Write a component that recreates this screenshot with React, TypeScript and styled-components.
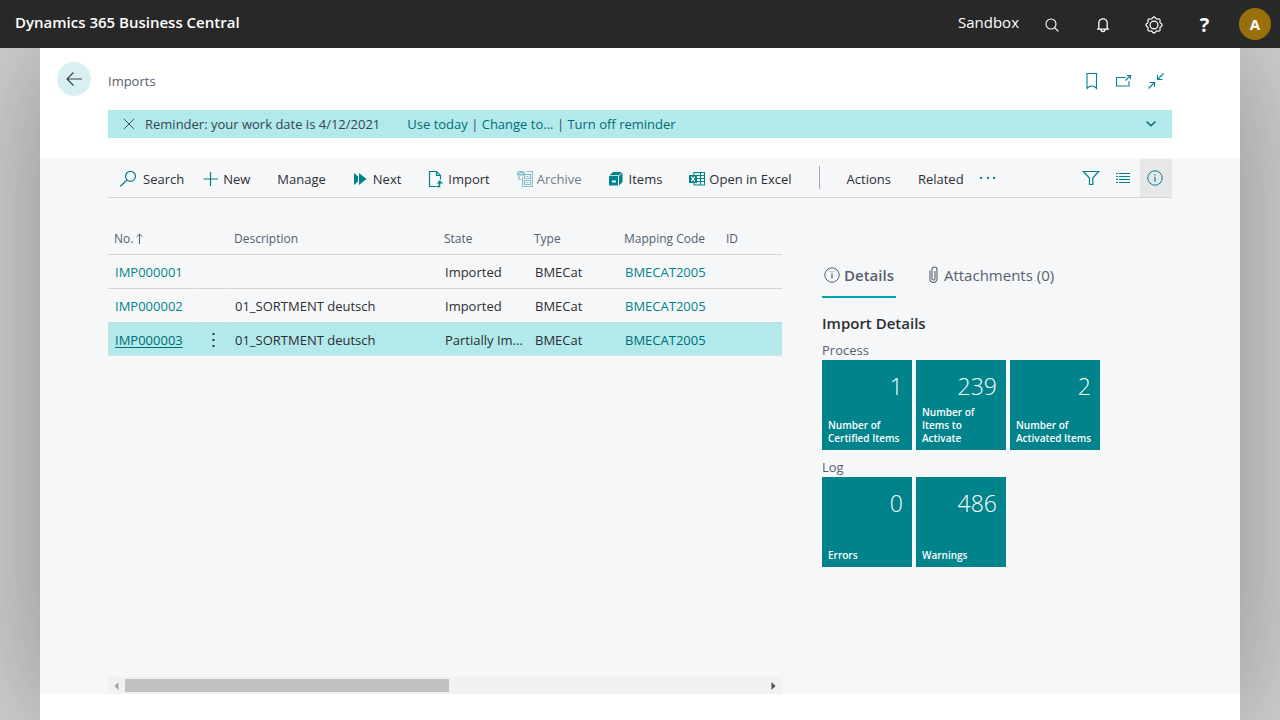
import React from "react";
import styled, { createGlobalStyle, css } from "styled-components";

const color = {
  teal: "#00838b",
  band: "#b2e9eb",
  muted: "#55606f",
  text: "#2c2e31",
  line: "#d2d5d8",
  surface: "#f6f7f9",
};

const GlobalStyle = createGlobalStyle`
  *, *::before, *::after { box-sizing: border-box; }
  body {
    margin: 0;
    font-family: "Open Sans", "Noto Sans", sans-serif;
    font-size: 13px;
    line-height: 20px;
    color: ${color.text};
  }
  button {
    font: inherit;
    color: inherit;
    background: none;
    border: 0;
    padding: 0;
    cursor: pointer;
  }
  a { color: ${color.teal}; text-decoration: none; }
  svg { display: block; flex: none; fill: none; stroke: currentColor; }
  h1, h2, h3 { margin: 0; font: inherit; }
`;

const Shell = styled.div`
  display: flex;
  flex-direction: column;
  min-height: 100vh;
`;

const TopBar = styled.header`
  position: relative;
  z-index: 1;
  display: flex;
  align-items: center;
  height: 48px;
  padding: 0 9px 0 15px;
  color: #fff;
  background: #282828;
  font-size: 15px;
`;

const Product = styled.h1`
  flex: 1;
  padding-bottom: 5px;
  font-weight: 600;
`;

const Environment = styled.span`
  padding: 0 19px 5px 0;
`;

const TopButton = styled.button`
  display: grid;
  place-items: center;
  width: 27px;
  height: 48px;
  margin-right: 24px;
  padding-top: 2px;
`;

const HelpMark = styled.span`
  font-size: 20px;
  font-weight: 700;
`;

const Avatar = styled.button`
  width: 32px;
  height: 32px;
  margin-left: -3px;
  border-radius: 50%;
  background: #986f0b;
  font-weight: 700;
`;

const Backdrop = styled.div`
  flex: 1;
  display: flex;
  padding: 0 40px;
  background: #d0d0d0;
  overflow: hidden;
`;

const Page = styled.main`
  flex: 1;
  min-width: 0;
  display: flex;
  flex-direction: column;
  padding-bottom: 26px;
  background: #fff;
  box-shadow: 0 0 120px rgba(0, 0, 0, 0.32);
`;

const TitleRow = styled.div`
  display: flex;
  align-items: center;
  padding: 14px 75px 14px 17px;
`;

const BackButton = styled.button`
  display: grid;
  place-items: center;
  width: 34px;
  height: 34px;
  margin-right: 17px;
  border-radius: 50%;
  background: #d9f0f2;
  color: #3c4247;
`;

const PageTitle = styled.h2`
  flex: 1;
  padding-top: 4px;
  color: ${color.muted};
`;

const PageTools = styled.div`
  display: flex;
  gap: 15px;
  padding-top: 4px;
  color: ${color.teal};

  button { display: block; }
`;

const Reminder = styled.div`
  display: flex;
  align-items: center;
  height: 28px;
  margin: 0 68px 20px;
  padding: 0 15px;
  background: ${color.band};
  color: #35474b;

  a { color: #006d75; }
`;

const CloseButton = styled.button`
  margin-right: 10px;
`;

const ReminderText = styled.span`
  margin-right: 27px;
`;

const ReminderLinks = styled.span`
  flex: 1;
`;

const ExpandButton = styled.button`
  color: #006d75;
`;

const Content = styled.section`
  flex: 1;
  display: flex;
  flex-direction: column;
  padding: 0 68px;
  background: ${color.surface};
`;

const Toolbar = styled.div`
  display: flex;
  align-items: center;
  gap: 27px;
  height: 40px;
  padding-left: 12px;
  border-bottom: 1px solid ${color.line};
`;

const Action = styled.button<{ $dim?: boolean }>`
  display: flex;
  align-items: center;
  gap: 4px;
  padding-top: 2px;
  white-space: nowrap;
  color: ${(p) => (p.$dim ? "#737c88" : color.text)};

  svg {
    color: ${color.teal};
    opacity: ${(p) => (p.$dim ? 0.45 : 1)};
  }
`;

const ActionPair = styled.div<{ $gap: number }>`
  display: flex;
  gap: ${(p) => p.$gap}px;
`;

const Divider = styled.span`
  width: 1px;
  height: 23px;
  background: #a5a9b3;
`;

const ViewButtons = styled.div`
  display: flex;
  align-self: stretch;
  margin-left: auto;
  padding-top: 1px;
`;

const ViewButton = styled.button<{ $active?: boolean }>`
  display: grid;
  place-items: center;
  width: 32px;
  padding-right: 2px;
  color: ${color.teal};
  border-radius: 2px;
  background: ${(p) => (p.$active ? "#e6e7e8" : "transparent")};
`;

const Columns = styled.div`
  flex: 1;
  display: grid;
  grid-template-columns: minmax(0, 1fr) 350px;
  gap: 40px;
`;

const ListPane = styled.div`
  display: flex;
  flex-direction: column;
  justify-content: space-between;
`;

const Grid = styled.table`
  width: 100%;
  table-layout: fixed;
  border-spacing: 0;
`;

const HeadCell = styled.th<{ $rule?: boolean }>`
  height: 57px;
  padding: 26px 0 0 6px;
  border-bottom: 1px solid ${color.line};
  ${(p) => p.$rule && css`border-right: 1px solid #f1f3f5;`}
  text-align: left;
  font-size: 12px;
  font-weight: 400;
  color: ${color.muted};
  white-space: nowrap;
`;

const Cell = styled.td<{ $split?: boolean }>`
  height: 34px;
  padding: 1px 4px 0 7px;
  border-bottom: 1px solid ${color.line};
  ${(p) => p.$split && css`border-left: 1px solid transparent; padding-left: 6px;`}
  overflow: hidden;
  text-overflow: ellipsis;
  white-space: nowrap;
`;

const Row = styled.tr<{ $selected?: boolean }>`
  background: ${(p) => (p.$selected ? color.band : "transparent")};
  a {
    color: ${(p) => (p.$selected ? "#006d75" : color.teal)};
  }
  td:first-child a {
    text-decoration: ${(p) => (p.$selected ? "underline" : "none")};
    text-underline-offset: 2px;
  }
  ${(p) => p.$selected && css`
    ${Cell} {
      height: 33px;
      border-bottom-color: #dfe2e4;
    }
  `}
`;

const RowMenu = styled.button`
  display: block;
  padding: 0 6px;
`;

const ScrollTrack = styled.div`
  display: flex;
  align-items: center;
  height: 17px;
  background: #f1f1f1;
`;

const ScrollArrow = styled.button<{ $end?: boolean }>`
  display: grid;
  place-items: center;
  width: 17px;
  height: 17px;
  margin-left: ${(p) => (p.$end ? "auto" : 0)};
  color: ${(p) => (p.$end ? "#505050" : "#a3a3a3")};
`;

const ScrollThumb = styled.div`
  width: 48%;
  height: 13px;
  background: #c1c1c1;
`;

const FactBox = styled.aside`
  padding-top: 60px;
`;

const Tabs = styled.div`
  display: flex;
  gap: 30px;
  font-size: 15px;
  color: ${color.muted};
`;

const Tab = styled.button<{ $active?: boolean }>`
  display: flex;
  align-items: center;
  gap: 4px;
  height: 40px;
  padding: 0 2px 5px;
  border-bottom: 2px solid ${(p) => (p.$active ? "#00a4ab" : "transparent")};
  font-weight: ${(p) => (p.$active ? 600 : 400)};
`;

const FactTitle = styled.h3`
  padding: 14px 0 7px;
  font-size: 15px;
  line-height: 22px;
  font-weight: 600;
`;

const GroupLabel = styled.div`
  padding-bottom: 1px;
  line-height: 18px;
  color: ${color.muted};
`;

const Tiles = styled.div`
  display: flex;
  gap: 4px;
  margin-bottom: 8px;
`;

const Tile = styled.button`
  display: flex;
  flex-direction: column;
  justify-content: space-between;
  width: 90px;
  height: 90px;
  padding: 10px 4px 5px 6px;
  background: ${color.teal};
  color: #fff;
  text-align: left;
`;

const TileValue = styled.span`
  align-self: flex-end;
  padding-right: 5px;
  font-size: 23px;
  line-height: 32px;
  font-weight: 300;
`;

const TileLabel = styled.span`
  font-size: 10px;
  line-height: 13px;
  font-weight: 600;
`;

const SearchIcon = () => (
  <svg width="14" height="14" viewBox="0 0 14 14">
    <circle cx="6" cy="6" r="5" strokeWidth="1.1" />
    <path d="M9.6 9.6 13.4 13.4" strokeWidth="1.3" />
  </svg>
);

const BellIcon = () => (
  <svg width="14" height="16" viewBox="0 0 14 16" strokeWidth="1.3">
    <path d="M2.8 11.8V6a4.2 4.2 0 0 1 8.4 0v5.8M1 12.2h12M5 12.6a2 2 0 0 0 4 0" />
  </svg>
);

const gearPath = (() => {
  const points: string[] = [];
  for (let i = 0; i <= 96; i++) {
    const a = (i / 96) * Math.PI * 2;
    const r = 7.3 + 0.75 * Math.cos(a * 8);
    points.push(`${(9 + r * Math.cos(a)).toFixed(2)} ${(9 + r * Math.sin(a)).toFixed(2)}`);
  }
  return `M${points.join("L")}Z`;
})();

const GearIcon = () => (
  <svg width="18" height="18" viewBox="0 0 18 18" strokeWidth="1.2">
    <path d={gearPath} />
    <circle cx="9" cy="9" r="3.9" />
  </svg>
);

const BackIcon = () => (
  <svg width="16" height="14" viewBox="0 0 16 14" strokeWidth="1.2">
    <path d="M16 7H1M7.5.5 1 7l6.5 6.5" />
  </svg>
);

const BookmarkIcon = () => (
  <svg width="16" height="18" viewBox="0 0 16 18" strokeWidth="1.1">
    <path d="M3 1.5h9.5v15L11 15c-2-1.3-4.5-1.3-6.5 0L3 16.5Z" />
  </svg>
);

const PopOutIcon = () => (
  <svg width="17" height="18" viewBox="0 0 17 18" strokeWidth="1.1">
    <path d="M10.5 5.5h-9V14H14V9M10.5 8.5l5-5M12 3.5h3.5V7" />
  </svg>
);

const CollapseIcon = () => (
  <svg width="18" height="18" viewBox="0 0 18 18" strokeWidth="1.1">
    <path d="M16.5 1.5l-6 6M10.5 3v4.5h5M1.5 16.5l6-6M2.5 10.5h5V15" />
  </svg>
);

const CrossIcon = () => (
  <svg width="12" height="12" viewBox="0 0 12 12" strokeWidth=".9">
    <path d="m.8.8 10.4 10.4M11.2.8.8 11.2" />
  </svg>
);

const ChevronIcon = () => (
  <svg width="12" height="8" viewBox="0 0 12 8" strokeWidth="1.5">
    <path d="m1.5 1.5 4.5 4.3 4.5-4.3" />
  </svg>
);

const FindIcon = () => (
  <svg width="19" height="18" viewBox="1 0 19 18" strokeWidth="1.2">
    <circle cx="11.5" cy="6.3" r="5" />
    <path d="M8 10 1.2 16.5" />
  </svg>
);

const PlusIcon = () => (
  <svg width="16" height="16" viewBox="0 0 16 16" strokeWidth="1.2">
    <path d="M7.5 1v14M.5 8H15" />
  </svg>
);

const NextIcon = () => (
  <svg width="16" height="14" viewBox="0 0 16 14">
    <path d="M1 1l4 3.5v5L1 13ZM6 1l7.5 6L6 13Z" fill="currentColor" stroke="none" />
  </svg>
);

const ImportIcon = () => (
  <svg width="16" height="18" viewBox="0 0 16 18" strokeWidth="1.2">
    <path d="M8.5 16.5h-7v-15h7l4 4v4M8.5 1.5v4h4" />
    <path d="M9 16.5h2.5V12" strokeWidth="1.5" />
    <path d="M8.7 13.5 11.7 10.3 15 13.5Z" fill="currentColor" stroke="none" />
  </svg>
);

const ArchiveIcon = () => (
  <svg width="16" height="18" viewBox="0 0 16 18" strokeWidth="1.2">
    <path d="M0 1h8v4.5H0Z" fill="currentColor" stroke="none" />
    <path d="m0 1.3 4 2.5 4-2.5" stroke="#f6f7f9" strokeWidth=".8" />
    <path d="M9.5 1.5h6v15h-10v-9M2 6v3.5h2M7.5 4.5h6v4h-6ZM7.5 10.5h6v4h-6ZM9.5 6.5h2M9.5 12.5h2" />
  </svg>
);

const ItemsIcon = () => (
  <svg width="16" height="16" viewBox="0 0 16 16">
    <path d="M0 5h9v9.5H0ZM.7 4.2 4 1h9L9.8 4.2ZM10 5l3.5-3.5V11L10 14.5Z" fill="currentColor" stroke="none" />
    <path d="M3 10.5h4" stroke="#fff" strokeWidth="2" />
  </svg>
);

const ExcelIcon = () => (
  <svg width="16" height="16" viewBox="0 0 16 16">
    <path d="M5 1.5h10.5V14H5M5 1v13M8 4.500h7M8 7.5h7M8 10.5h7M11.5 2v12" strokeWidth="1.1" />
    <path d="M0 4h8v8H0Z" fill="currentColor" stroke="none" />
    <path d="m2.200 5.600 3.600 4.800M5.800 5.600l-3.600 4.800" stroke="#fff" strokeWidth="1.3" />
  </svg>
);

const MoreIcon = () => (
  <svg width="16" height="20" viewBox="0 0 16 20">
    <path d="M0 8h2v2H0ZM7 8h2v2H7ZM13 8h2v2h-2Z" fill="currentColor" stroke="none" />
  </svg>
);

const FilterIcon = () => (
  <svg width="18" height="16" viewBox="0 0 18 16" strokeWidth="1.2">
    <path d="M1.3 1.5h15.4L10.8 8v6.5H7.5V8Z" />
  </svg>
);

const ListIcon = () => (
  <svg width="14" height="12" viewBox="0 0 14 12">
    <path d="M0 1.5h2M3 1.5h11M0 4.5h2M3 4.5h11M0 7.5h2M3 7.5h11M0 10.5h2M3 10.5h11" />
  </svg>
);

const InfoIcon = () => (
  <svg width="16" height="16" viewBox="0 0 16 16">
    <circle cx="8" cy="8" r="7.2" />
    <path d="M8 6.7v5M8 4.2v1.3" strokeWidth="1.2" />
  </svg>
);

const ClipIcon = () => (
  <svg width="12" height="18" viewBox="0 0 12 18" strokeWidth="1.1">
    <path d="M2 4.5V13a3.5 3.5 0 0 0 7 0V3.5a2.500 2.500 0 0 0-5 0v9a1.500 1.500 0 0 0 3 0V5" />
  </svg>
);

const DotsIcon = () => (
  <svg width="3" height="16" viewBox="0 0 3 16">
    <path d="M.5 1h2v2h-2ZM.5 7h2v2h-2ZM.5 13h2v2h-2Z" fill="currentColor" stroke="none" />
  </svg>
);

const SortIcon = () => (
  <svg width="7" height="13" viewBox="0 0 7 13">
    <path d="M3.5 11V1M.7 3.8 3.5 1l2.8 2.8" />
  </svg>
);

const SortLabel = styled.span`
  display: flex;
  align-items: center;
  gap: 3px;
`;

const rows = [
  { no: "IMP000001", description: "", state: "Imported", type: "BMECat", code: "BMECAT2005" },
  { no: "IMP000002", description: "01_SORTMENT deutsch", state: "Imported", type: "BMECat", code: "BMECAT2005" },
  { no: "IMP000003", description: "01_SORTMENT deutsch", state: "Partially Im...", type: "BMECat", code: "BMECAT2005", selected: true },
];

const groups = [
  {
    label: "Process",
    tiles: [
      { value: 1, label: "Number of Certified Items" },
      { value: 239, label: "Number of Items to Activate" },
      { value: 2, label: "Number of Activated Items" },
    ],
  },
  {
    label: "Log",
    tiles: [
      { value: 0, label: "Errors" },
      { value: 486, label: "Warnings" },
    ],
  },
];

export default function App() {
  return (
    <Shell>
      <GlobalStyle />
      <TopBar>
        <Product>Dynamics 365 Business Central</Product>
        <Environment>Sandbox</Environment>
        <TopButton aria-label="Search"><SearchIcon /></TopButton>
        <TopButton aria-label="Notifications"><BellIcon /></TopButton>
        <TopButton aria-label="Settings"><GearIcon /></TopButton>
        <TopButton aria-label="Help"><HelpMark>?</HelpMark></TopButton>
        <Avatar aria-label="Account">A</Avatar>
      </TopBar>
      <Backdrop>
        <Page>
          <TitleRow>
            <BackButton aria-label="Back"><BackIcon /></BackButton>
            <PageTitle>Imports</PageTitle>
            <PageTools>
              <button aria-label="Bookmark"><BookmarkIcon /></button>
              <button aria-label="Open in new window"><PopOutIcon /></button>
              <button aria-label="Collapse"><CollapseIcon /></button>
            </PageTools>
          </TitleRow>
          <Reminder>
            <CloseButton aria-label="Dismiss"><CrossIcon /></CloseButton>
            <ReminderText>Reminder: your work date is 4/12/2021</ReminderText>
            <ReminderLinks>
              <a href="#today">Use today</a> | <a href="#change">Change to...</a> | <a href="#off">Turn off reminder</a>
            </ReminderLinks>
            <ExpandButton aria-label="Expand"><ChevronIcon /></ExpandButton>
          </Reminder>
          <Content>
            <Toolbar>
              <ActionPair $gap={19}>
                <Action><FindIcon />Search</Action>
                <Action><PlusIcon />New</Action>
              </ActionPair>
              <Action>Manage</Action>
              <Action><NextIcon />Next</Action>
              <Action><ImportIcon />Import</Action>
              <Action $dim><ArchiveIcon />Archive</Action>
              <Action><ItemsIcon />Items</Action>
              <Action><ExcelIcon />Open in Excel</Action>
              <Divider />
              <Action>Actions</Action>
              <ActionPair $gap={16}>
                <Action>Related</Action>
                <Action aria-label="More options"><MoreIcon /></Action>
              </ActionPair>
              <ViewButtons>
                <ViewButton aria-label="Filter"><FilterIcon /></ViewButton>
                <ViewButton aria-label="List view"><ListIcon /></ViewButton>
                <ViewButton aria-label="Details pane" $active><InfoIcon /></ViewButton>
              </ViewButtons>
            </Toolbar>
            <Columns>
              <ListPane>
                <Grid>
                  <colgroup>
                    <col width="91" />
                    <col width="29" />
                    <col />
                    <col width="90" />
                    <col width="90" />
                    <col width="102" />
                    <col width="62" />
                  </colgroup>
                  <thead>
                    <tr>
                      <HeadCell><SortLabel>No.<SortIcon /></SortLabel></HeadCell>
                      <HeadCell aria-label="Row actions" />
                      <HeadCell $rule>Description</HeadCell>
                      <HeadCell>State</HeadCell>
                      <HeadCell>Type</HeadCell>
                      <HeadCell>Mapping Code</HeadCell>
                      <HeadCell>ID</HeadCell>
                    </tr>
                  </thead>
                  <tbody>
                    {rows.map((row) => (
                      <Row key={row.no} $selected={row.selected}>
                        <Cell><a href={`#${row.no}`}>{row.no}</a></Cell>
                        <Cell $split>
                          {row.selected && <RowMenu aria-label="Show more options"><DotsIcon /></RowMenu>}
                        </Cell>
                        <Cell $split>{row.description}</Cell>
                        <Cell>{row.state}</Cell>
                        <Cell>{row.type}</Cell>
                        <Cell><a href={`#${row.code}`}>{row.code}</a></Cell>
                        <Cell />
                      </Row>
                    ))}
                  </tbody>
                </Grid>
                <ScrollTrack>
                  <ScrollArrow aria-label="Scroll left">
                    <svg width="5" height="8" viewBox="0 0 5 8"><path d="M4.5 0v8L.5 4Z" fill="currentColor" stroke="none" /></svg>
                  </ScrollArrow>
                  <ScrollThumb />
                  <ScrollArrow $end aria-label="Scroll right">
                    <svg width="5" height="8" viewBox="0 0 5 8"><path d="M.5 0v8l4-4Z" fill="currentColor" stroke="none" /></svg>
                  </ScrollArrow>
                </ScrollTrack>
              </ListPane>
              <FactBox>
                <Tabs>
                  <Tab $active><InfoIcon />Details</Tab>
                  <Tab><ClipIcon />Attachments (0)</Tab>
                </Tabs>
                <FactTitle>Import Details</FactTitle>
                {groups.map((group) => (
                  <React.Fragment key={group.label}>
                    <GroupLabel>{group.label}</GroupLabel>
                    <Tiles>
                      {group.tiles.map((tile) => (
                        <Tile key={tile.label}>
                          <TileValue>{tile.value}</TileValue>
                          <TileLabel>{tile.label}</TileLabel>
                        </Tile>
                      ))}
                    </Tiles>
                  </React.Fragment>
                ))}
              </FactBox>
            </Columns>
          </Content>
        </Page>
      </Backdrop>
    </Shell>
  );
}
